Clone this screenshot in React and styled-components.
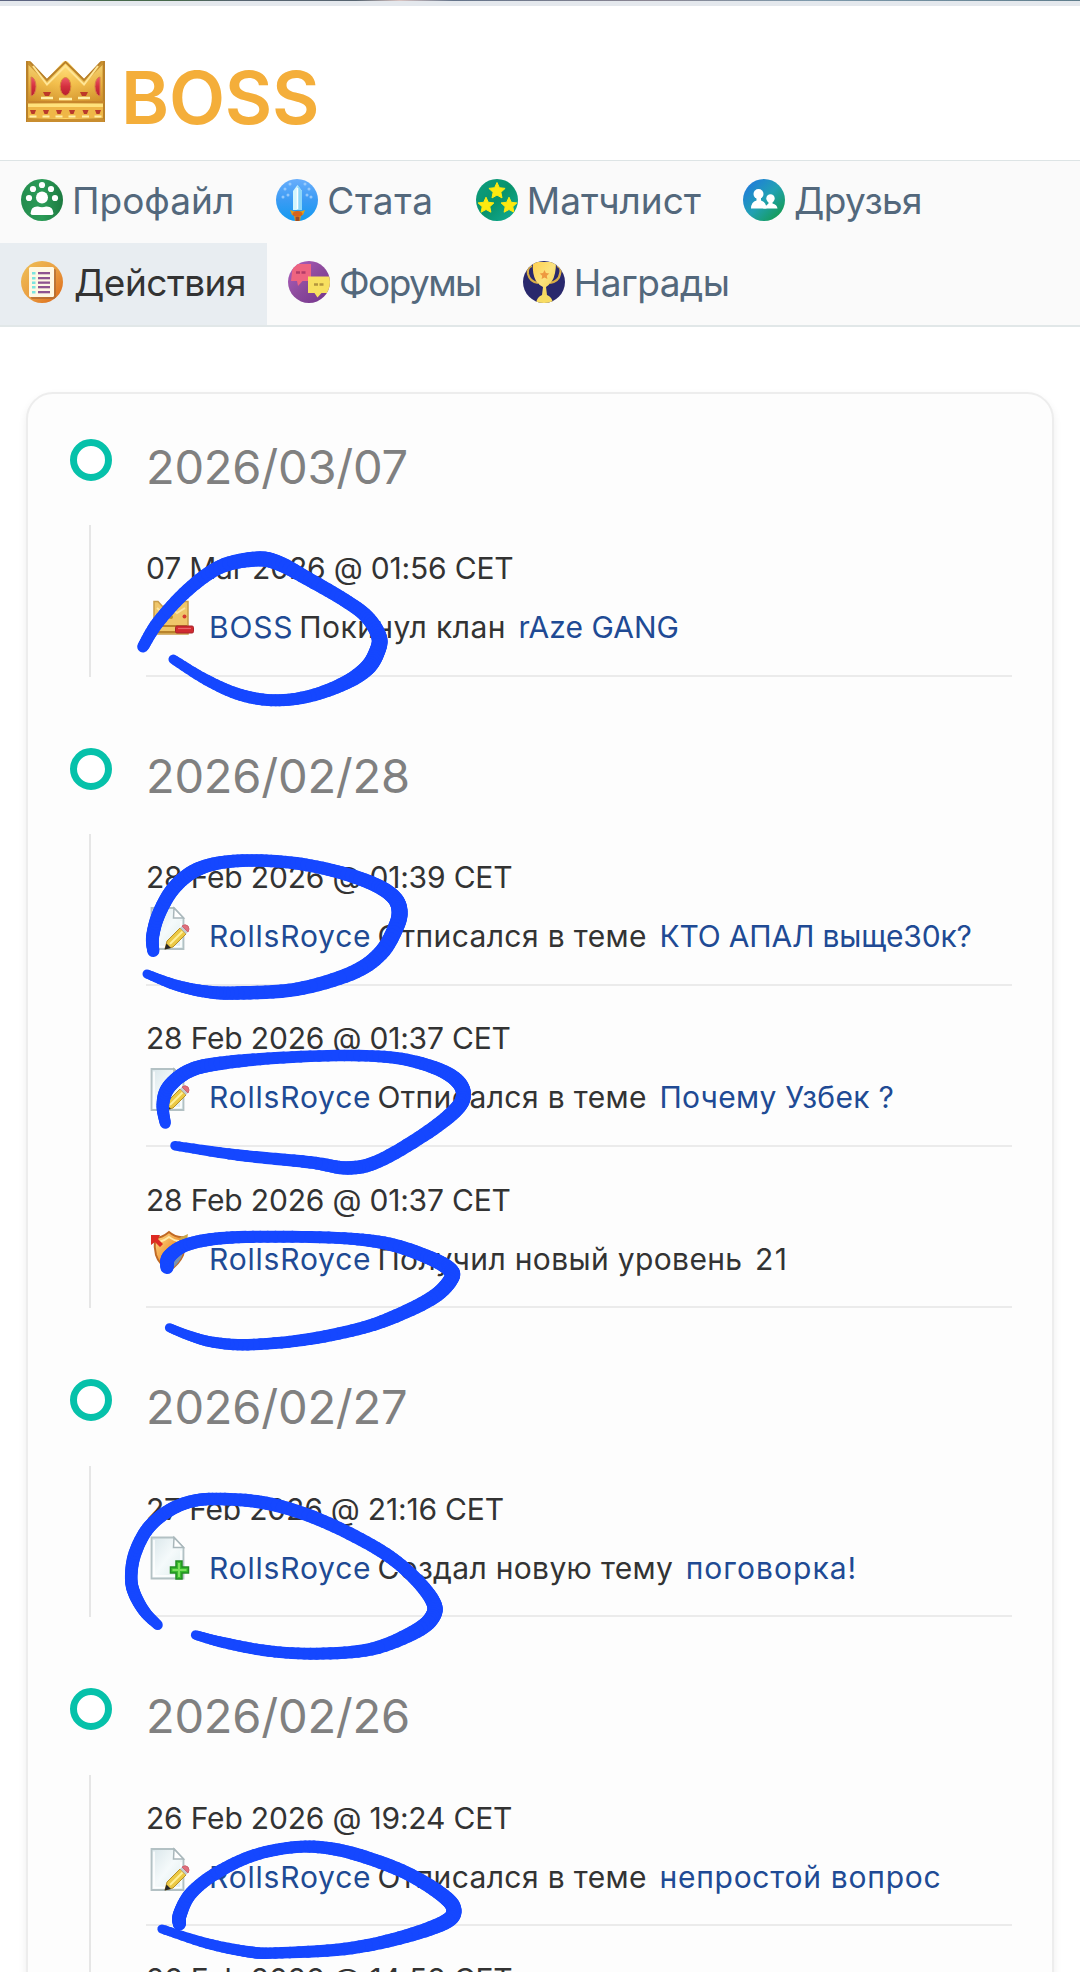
import React from "react";
import styled, { createGlobalStyle } from "styled-components";

const GlobalStyle = createGlobalStyle`
  * { box-sizing: border-box; }
  body { margin: 0; background: #fff; }
`;

const Page = styled.div`
  position: relative;
  width: 1080px;
  height: 1972px;
  overflow: hidden;
  background: #fff;
  color: #333;
  font-family: Inter, "Open Sans", sans-serif;
  font-size: 30px;
`;

const CoverEdge = styled.div`
  height: 6px;
  border-top: 1px solid #64798a;
  background: #e4e8ed;
  border-image: linear-gradient(90deg, #5c6480 0 5%, #46684a 9% 16%, #566470 22% 33%, #d9c4c2 37%, #64748a 42%, #8a8592 60%, #7e9aac 75%, #5f7d8c) 1;
  border-width: 1px 0 0;
`;

const Header = styled.header`
  display: flex;
  align-items: center;
  height: 154px;
  padding: 0 26px 0 26px;
`;

const HeaderCrown = styled.svg`
  width: 79px;
  height: 61px;
  margin-top: 17px;
`;

const Title = styled.h1`
  margin: 29px 0 0 16px;
  font-size: 73px;
  line-height: 88px;
  font-weight: 600;
  letter-spacing: -0.23px;
  color: #f4ae3a;
`;

const Nav = styled.nav`
  display: flex;
  flex-wrap: wrap;
  border-top: 1px solid #dde4e5;
  border-bottom: 2px solid #e1e7e8;
  background: #fafafa;
`;

const NavItem = styled.a`
  display: flex;
  align-items: center;
  gap: ${(p) => (p.$active ? 11 : 9)}px;
  height: 81.75px;
  padding: 0 21px 3px;
  font-size: 37px;
  letter-spacing: ${(p) => p.$track || 0}px;
  color: ${(p) => (p.$active ? "#333" : "#53687c")};
  background: ${(p) => (p.$active ? "#e8edf1" : "transparent")};
  svg { width: 42px; height: 42px; flex: none; }
`;

const NavBreak = styled.span`
  flex-basis: 100%;
  height: 0;
`;

const Card = styled.main`
  margin: 65px 26px 0;
  height: 1700px;
  padding: 45px 40px 0 42px;
  border: 2px solid #ededed;
  border-radius: 27px;
  background: #fdfdfd;
  box-shadow: 0 4px 9px rgba(0, 0, 0, 0.07);
`;

const Group = styled.section`
  margin-bottom: 71px;
`;

const GroupHead = styled.div`
  display: flex;
  align-items: flex-start;
  height: 86.5px;
`;

const Ring = styled.span`
  width: 42px;
  height: 42px;
  border: 7px solid #06c1aa;
  border-radius: 50%;
  background: #fff;
`;

const DateTitle = styled.h2`
  margin: 0 0 0 34px;
  font-size: 47px;
  line-height: 56px;
  font-weight: 400;
  letter-spacing: -0.22px;
  color: #808080;
`;

const GroupBody = styled.div`
  display: flex;
  flex-direction: column;
  gap: 9.8px;
  margin-left: 19px;
  padding-left: 55px;
  border-left: 2px solid #e6e6e6;
`;

const Entry = styled.article`
  padding: 14px 0 17.5px;
  border-bottom: 2px solid #ebebeb;
`;

const Meta = styled.div`
  height: 59px;
  line-height: 59px;
  letter-spacing: -0.19px;
  white-space: pre;
`;

const Line = styled.div`
  display: flex;
  height: 59px;
  line-height: 59px;
  white-space: pre;
`;

const LineIcon = styled.svg`
  flex: none;
  width: 63px;
  height: 59px;
  overflow: visible;
`;

const Name = styled.a`
  color: #204a94;
  letter-spacing: 0.8px;
  margin-right: 6px;
`;

const Action = styled.span`
  letter-spacing: ${(p) => p.$track}px;
  margin-right: 12.5px;
`;

const Target = styled.a`
  color: ${(p) => (p.$plain ? "#333" : "#204a94")};
  letter-spacing: ${(p) => p.$track}px;
`;

const InkLayer = styled.svg`
  position: absolute;
  inset: 0;
  width: 1080px;
  height: 1972px;
  pointer-events: none;
`;

function Defs() {
  const grads = [
    ["gold", 0, 1, "#ffe183", "#f3bd49", "#cf8c27"],
    ["goldside", 1, 0, "#c58c2b", "#ffd766", "#c58c2b"],
    ["gem", 0, 1, "#ee5a68", "#d4303e", "#b81f30"],
    ["leaf", 1, 0, "#248c4e", "#2c9c58", "#1c7a40"],
    ["sky", 0, 1, "#68aefc", "#3b9bf4", "#139af0"],
    ["teal", 1, 1, "#0e9d80", "#08936c", "#12ae98"],
    ["pals", 1, 1, "#1f72e4", "#21a1b4", "#119a38"],
    ["amber", 1, 1, "#efc158", "#eaa043", "#db6414"],
    ["violet", 1, 1, "#b060c0", "#8c4a9c", "#72348c"],
    ["paper", 1, 1, "#d9e6ea", "#f5fafb", "#dcebec"],
    ["shield", 1, 1, "#ffe28c", "#f09a3c", "#d87416"],
    ["cup", 1, 1, "#ffd050", "#fbe27e", "#f3cb40"],
  ];
  return (
    <svg width="0" height="0" style={{ position: "absolute" }}>
      <defs>
        {grads.map(([id, x, y, a, b, c]) => (
          <linearGradient key={id} id={id} x1="0" y1="0" x2={x} y2={y}>
            <stop offset="0" stopColor={a} />
            <stop offset="0.5" stopColor={b} />
            <stop offset="1" stopColor={c} />
          </linearGradient>
        ))}
        <clipPath id="disc"><circle cx="21" cy="21" r="21" /></clipPath>
      </defs>
    </svg>
  );
}

const Crown = () => (
  <HeaderCrown viewBox="0 0 79 61">
    <path d="M0 0H4L21 18L37 1Q39.500 -1 42 1L58 18L75 0H79V61H0Z" fill="url(#goldside)" />
    <path d="M2.500 4L21 23L39.500 4L58 23L76.500 4V41H2.500Z" fill="url(#gold)" opacity="0.75" />
    <path d="M1 0V60H78V0M4 1L21 19L39.500 1L58 19L75 1" fill="none" stroke="#b8802b" strokeWidth="1.800" />
    <path d="M7 5L21 23.500L39.500 5L58 23.500L72 5" fill="none" stroke="#ffe595" strokeWidth="2" />
    <path d="M5 16A5 9.500 0 0 1 5 35Z" fill="url(#gem)" stroke="#d87a4a" />
    <path d="M74 16A5 9.500 0 0 0 74 35Z" fill="url(#gem)" stroke="#d87a4a" />
    <ellipse cx="39.500" cy="25.500" rx="5.300" ry="9" fill="url(#gem)" stroke="#d8883a" />
    <path d="M17 31H25L23 35H19ZM54 31H62L60 35H56Z" fill="#bd3828" />
    <path d="M15 37H27M52 37H64M33 38H46" stroke="#fff0a8" strokeWidth="2.500" />
    <rect x="1" y="40" width="77" height="2.500" fill="#c8872d" />
    <rect x="2" y="42.500" width="75" height="3.500" fill="#ffe27c" />
    <rect x="2" y="46" width="75" height="11" fill="#efb747" />
    {[7, 20, 33, 46, 59.500, 72].map((x) => (
      <g key={x}>
        <path d={`M${x - 3} 49H${x + 3}L${x + 1.500} 53H${x - 1.500}Z`} fill="#b93a2c" />
        <path d={`M${x - 3.500} 55.500H${x + 3.500}`} stroke="#fff0a8" strokeWidth="2" />
      </g>
    ))}
    <rect x="1" y="58" width="77" height="3" fill="#c98d2f" />
  </HeaderCrown>
);

const Disc = ({ fill, children }) => (
  <svg viewBox="0 0 42 42">
    <g clipPath="url(#disc)">
      <rect width="42" height="42" fill={fill} />
      {children}
    </g>
  </svg>
);

const star = (cx, cy, r) =>
  Array.from({ length: 10 }, (_, i) => {
    const a = -Math.PI / 2 + (i * Math.PI) / 5;
    const q = i % 2 ? r * 0.48 : r;
    return `${(cx + q * Math.cos(a)).toFixed(1)},${(cy + q * Math.sin(a)).toFixed(1)}`;
  }).join(" ");

const ProfileIcon = () => (
  <Disc fill="url(#leaf)">
    <g fill="#fff">
      <circle cx="21" cy="18.500" r="6" />
      <path d="M9.500 34.500Q10 27 17 27.500Q21 29 25 27.500Q32 27 32.500 34.500Q32 36 30 36H12Q10 36 9.500 34.500Z" />
      {[[21, 6], [12, 10], [30, 10], [8, 19], [34, 19]].map(([x, y]) => (
        <circle key={x} cx={x} cy={y} r="3.100" />
      ))}
    </g>
  </Disc>
);

const StatsIcon = () => (
  <Disc fill="url(#sky)">
    {[[9, 10], [7, 18], [33, 10], [35, 18], [14, 5], [29, 5], [12, 16], [31, 16]].map(([x, y]) => (
      <circle key={`${x}-${y}`} cx={x} cy={y} r="1.500" fill="#a6d2fc" opacity="0.8" />
    ))}
    <path d="M17 12L21.500 6L26 12V31H17Z" fill="#d2f5fd" />
    <path d="M21.500 6L26 12V31H21.500Z" fill="#8ed7f8" />
    <path d="M21.500 9V30" stroke="#fff" strokeWidth="1.500" />
    <path d="M14 31Q21.500 34 29 31L27 36H25L24 42H19L18 36H16Z" fill="#e3a018" />
    <ellipse cx="21.500" cy="35" rx="5" ry="3" fill="#d5641c" />
    <rect x="19.500" y="38" width="4" height="5" fill="#9c4a28" />
  </Disc>
);

const MatchIcon = () => (
  <Disc fill="url(#teal)">
    {[[21, 12, 8.500], [10, 26.500, 8.300], [33, 26.500, 8.300]].map(([x, y, r]) => (
      <polygon key={x} points={star(x, y, r)} fill="#fde910" stroke="#fde910" strokeLinejoin="round" />
    ))}
  </Disc>
);

const FriendsIcon = () => (
  <Disc fill="url(#pals)">
    <g fill="#fff">
      <circle cx="15.500" cy="15" r="5" />
      <path d="M8 29.500Q8 23 13.500 21.500V18H18V21.500Q23 23 23.500 29.500Z" />
      <circle cx="27.500" cy="19.500" r="4.200" />
      <path d="M20 29.500L25.500 24.500V22H29.500V24.500Q34 25.500 34.500 29.500Z" />
    </g>
  </Disc>
);

const ActionsIcon = () => (
  <Disc fill="url(#amber)">
    <rect x="10" y="8" width="25" height="30" rx="1.500" fill="#ab6a35" opacity="0.7" />
    <rect x="8" y="6" width="25" height="30" rx="1.500" fill="#fff8e3" />
    {[11, 16, 20.500, 25, 30].map((y) => (
      <g key={y}>
        <rect x="11" y={y} width="3.500" height="2.500" fill="#7be5df" />
        <rect x="17" y={y} width="12" height="2.300" fill="#8e5490" />
      </g>
    ))}
  </Disc>
);

const ForumIcon = () => (
  <Disc fill="url(#violet)">
    <path d="M5 3H23V20H14.500L10 25L9 20H3Z" fill="#ee6480" />
    <path d="M8 11.500H18" stroke="#b33c68" strokeWidth="2.500" strokeDasharray="4 1.500" />
    <path d="M20 15.500H42V32H33.500L29.500 36.500L26.500 32H20Z" fill="#f7e060" />
    <path d="M26 23.500H36" stroke="#b4963e" strokeWidth="2.500" strokeDasharray="4 1.500" />
  </Disc>
);

const AwardIcon = () => (
  <Disc fill="#29286c">
    <path d="M9 5Q4 6 5 13Q7 21 15 22M34 5Q39 6 37 13Q36 20 27 22" stroke="#d8ad46" strokeWidth="2.200" fill="none" />
    <path d="M10 1H33Q33 14 29 20Q26 24 23 26L24 34H19L20 26Q16 24 13 20Q9 13 10 1Z" fill="url(#cup)" />
    <polygon points={star(21.500, 14, 5)} fill="#ee9940" />
    <path d="M13 42Q14 36 19 34H24Q29 36 30 42Z" fill="#f8dc64" />
  </Disc>
);

const Sheet = ({ y }) => (
  <g>
    <path d={`M5.500 ${y}H28L37.500 ${y + 10}V${y + 41}H5.500Z`} fill="url(#paper)" stroke="#b3c1c4" strokeWidth="1.800" />
    <path d={`M28 ${y}L27.500 ${y + 10}H37.500Z`} fill="#fff" stroke="#a9b7bb" strokeWidth="1.500" />
    <path d={`M8 ${y + 2.500}V${y + 38.500}H35V${y + 13}`} fill="none" stroke="#fff" strokeWidth="1.500" />
  </g>
);

const entryIcons = {
  left: (
    <g>
      <path d="M8 3.500H12L17 9L23.500 3.500L31 9L37 3.500H42V36H8Z" fill="#efc66a" stroke="#c99d4a" strokeWidth="1.500" />
      <path d="M11 10L17 15L24 9L31 15L39 10" stroke="#fbe5a0" strokeWidth="2" fill="none" />
      <circle cx="38.500" cy="18.500" r="2" fill="#d43a30" />
      <circle cx="25" cy="19" r="2" fill="#b88d2f" />
      <path d="M9 28H41M9 34H41" stroke="#b8832c" strokeWidth="1.800" />
      <rect x="29.500" y="28" width="18" height="7" rx="1.500" fill="#d12a30" stroke="#a9252c" />
      <path d="M32 30.500H45" stroke="#e9676b" strokeWidth="1.200" />
    </g>
  ),
  edit: (
    <g>
      <Sheet y={1} />
      <path d="M19 42L21 34L34 21L40 27L27 40Z" fill="#ecc944" stroke="#b78f26" strokeWidth="1" />
      <path d="M24 37L36.500 24.500" stroke="#fff09a" strokeWidth="2" />
      <path d="M34 21L36 19L42 25L40 27Z" fill="#c3ccd0" />
      <path d="M36 19Q39 16.500 42 19Q44 22 42 25Z" fill="#e0707c" stroke="#cf6270" />
      <path d="M18.500 42.500L20.500 36.500L25 41Z" fill="#282828" />
    </g>
  ),
  create: (
    <g>
      <Sheet y={-1.5} />
      <path d="M30 22H36V28H42.500V34H36V40H30V34H24.500V28H30Z" fill="#38bb2d" stroke="#228d23" strokeWidth="1.500" />
      <path d="M33 24V38M26.500 31H40.500" stroke="#7be05e" strokeWidth="2" />
    </g>
  ),
  level: (
    <g>
      <path d="M9 8Q16 8 23 2Q30 8 38 7Q39 18 37 25Q33 34 24 40Q13 35 10 25Q8 17 9 8Z" fill="url(#shield)" stroke="#c06924" strokeWidth="2" />
      <path d="M24 22L38 13Q39 30 24 40Z" fill="#7b91ad" />
      <path d="M13 12Q18 11 23 7Q29 11 33 11" stroke="#ffe9a5" strokeWidth="2" fill="none" />
      <path d="M5 5L14 5L12 9L17 14L14 17L9 12L5 15Z" fill="#dd2a22" />
      <path d="M33 8L42 4L41 10L36 13Z" fill="#c9a448" />
    </g>
  ),
};

const navItems = [
  { label: "Профайл", icon: ProfileIcon, track: 0 },
  { label: "Стата", icon: StatsIcon, track: 0.7 },
  { label: "Матчлист", icon: MatchIcon, track: 0 },
  { label: "Друзья", icon: FriendsIcon, track: -0.65 },
  null,
  { label: "Действия", icon: ActionsIcon, track: -0.5, active: true },
  { label: "Форумы", icon: ForumIcon, track: -1.6 },
  { label: "Награды", icon: AwardIcon, track: -0.5 },
];

const reply = { icon: "edit", name: "RollsRoyce", action: "Отписался в теме", at: 0.38 };

const groups = [
  {
    date: "2026/03/07",
    entries: [
      { time: "07 Mar 2026 @ 01:56 CET", icon: "left", name: "BOSS", action: "Покинул клан", at: 0.45, target: "rAze GANG", tt: 0.02 },
    ],
  },
  {
    date: "2026/02/28",
    entries: [
      { ...reply, time: "28 Feb 2026 @ 01:39 CET", target: "КТО АПАЛ выще30к?", tt: -0.16 },
      { ...reply, time: "28 Feb 2026 @ 01:37 CET", target: "Почему Узбек ?", tt: 0.3 },
      { time: "28 Feb 2026 @ 01:37 CET", icon: "level", name: "RollsRoyce", action: "Получил новый уровень", at: 0.35, target: "21", tt: 1.4, plain: true },
    ],
  },
  {
    date: "2026/02/27",
    entries: [
      { time: "27 Feb 2026 @ 21:16 CET", icon: "create", name: "RollsRoyce", action: "Создал новую тему", at: 0.32, target: "поговорка!", tt: 1.04 },
    ],
  },
  {
    date: "2026/02/26",
    entries: [
      { ...reply, time: "26 Feb 2026 @ 19:24 CET", target: "непростой вопрос", tt: 0.74 },
      { time: "26 Feb 2026 @ 14:58 CET" },
    ],
  },
];

// Freehand marker strokes: [x, y, pen width] samples.
const strokes = [
  [[143, 646.7, 11.5], [158.4, 621.7, 12.5], [187.7, 590, 13], [220.4, 566.7, 14], [256.6, 559, 15], [279, 563.3, 15], [310, 580, 14], [344.4, 600, 13.5], [366.8, 616.7, 14], [379, 636.7, 15.5], [377, 651.7, 16], [366.8, 668.3, 16], [344.4, 683.3, 14], [310, 696, 12.5], [275.5, 700.3, 12], [241, 695, 12], [206.6, 680, 11], [173.2, 659.3, 9.5]],
  [[153.3, 951, 12], [152.6, 936.7, 13], [158.4, 915, 13.5], [172.2, 890, 14], [192.9, 871.7, 14], [220.4, 862.7, 13], [256.6, 860.5, 12.5], [296.2, 863.3, 12.5], [337.5, 871.7, 13], [372, 883.3, 14], [392.6, 896, 15], [399.5, 910, 16], [396, 927, 16], [380.6, 953.3, 15.5], [351.3, 973.3, 14.5], [296.2, 989.3, 13.5], [237.6, 993, 13.5], [206.6, 991.7, 12.5], [175.6, 985, 11], [147, 974, 9]],
  [[165.3, 1123.3, 11], [162.8, 1105, 12.5], [168.7, 1087, 14], [189.4, 1070.7, 14], [220.4, 1063.3, 13.5], [275.5, 1058, 12], [344.4, 1055.5, 11.5], [396, 1058, 12], [434, 1067.5, 13], [456.3, 1080, 14.5], [463.5, 1095, 15], [454.6, 1111, 15], [423.6, 1135, 14], [378.8, 1161, 13.5], [347.8, 1168, 13.5], [310, 1162.3, 12.5], [237.6, 1155, 11.5], [175, 1145.7, 9.5]],
  [[167, 1267.5, 13], [169, 1256.7, 14], [186, 1245, 13], [220.4, 1238.3, 12.5], [275.5, 1236.7, 12], [344.4, 1238.3, 12], [389.2, 1244, 13], [427, 1256.7, 14], [448.5, 1268.3, 15], [451.5, 1278.3, 15], [434, 1296.7, 14.5], [396, 1316, 13.5], [358.2, 1329, 12.5], [303, 1340, 12], [248, 1344.7, 11.5], [213.5, 1342.3, 11], [189.4, 1335.7, 10], [169.4, 1327.7, 9]],
  [[157.7, 1625, 10], [144.6, 1611.7, 11.5], [134.3, 1593.3, 12.5], [131.2, 1576.7, 12.5], [135, 1553.3, 13], [148, 1528.3, 13], [168.7, 1510.7, 13], [192.9, 1501, 12.5], [220.4, 1499, 12.5], [261.7, 1502.3, 13], [303, 1513.3, 13], [344.4, 1531, 13], [385.7, 1554, 13], [413.3, 1576.7, 13.5], [432.2, 1600, 14.5], [433.5, 1615, 15.5], [416.7, 1630.7, 15], [372, 1649, 13], [316.8, 1653.7, 12], [268.6, 1651, 11.5], [223.9, 1642.7, 11], [195.6, 1635, 9.5]],
  [[179.4, 1924, 13], [180, 1914, 14], [191, 1893.3, 13], [217, 1872.7, 12.5], [254.8, 1855, 12], [296.2, 1847, 12], [330.6, 1848.5, 12.5], [365, 1857, 13], [406.4, 1873, 13.5], [441, 1894, 14.5], [453.9, 1909.3, 15], [444.3, 1922.5, 15], [399.5, 1938, 13.5], [344.4, 1949, 12.5], [275.5, 1953, 11.5], [248, 1951.7, 11.5], [206.6, 1943.3, 10.5], [161.9, 1929, 9]],
];

function smooth(pts) {
  const out = [];
  for (let i = 0; i < pts.length - 1; i++) {
    const [a, b, c, d] = [pts[Math.max(i - 1, 0)], pts[i], pts[i + 1], pts[Math.min(i + 2, pts.length - 1)]];
    for (let k = 0; k < 8; k++) {
      const t = k / 8;
      out.push(
        [0, 1, 2].map((n) =>
          0.5 * (2 * b[n] + (c[n] - a[n]) * t + (2 * a[n] - 5 * b[n] + 4 * c[n] - d[n]) * t * t + (3 * b[n] - a[n] - 3 * c[n] + d[n]) * t * t * t)
        )
      );
    }
  }
  out.push(pts[pts.length - 1]);
  return out;
}

function Ink() {
  return (
    <InkLayer viewBox="0 0 1080 1972" stroke="#1547ff" strokeLinecap="round">
      {strokes.map((s, i) => {
        const pts = smooth(s);
        return (
          <g key={i}>
            {pts.slice(1).map((p, j) => (
              <line key={j} x1={pts[j][0]} y1={pts[j][1]} x2={p[0]} y2={p[1]} strokeWidth={p[2]} />
            ))}
          </g>
        );
      })}
    </InkLayer>
  );
}

export default function App() {
  return (
    <Page>
      <GlobalStyle />
      <Defs />
      <CoverEdge />
      <Header>
        <Crown />
        <Title>BOSS</Title>
      </Header>
      <Nav>
        {navItems.map((item, i) =>
          item ? (
            <NavItem key={i} $active={item.active} $track={item.track}>
              <item.icon />
              {item.label}
            </NavItem>
          ) : (
            <NavBreak key={i} />
          )
        )}
      </Nav>
      <Card>
        {groups.map((g) => (
          <Group key={g.date}>
            <GroupHead>
              <Ring />
              <DateTitle>{g.date}</DateTitle>
            </GroupHead>
            <GroupBody>
              {g.entries.map((e, i) => (
                <Entry key={i}>
                  <Meta>{e.time}</Meta>
                  {e.name && (
                    <Line>
                      <LineIcon viewBox="0 0 63 59">{entryIcons[e.icon]}</LineIcon>
                      <Name>{e.name}</Name>
                      <Action $track={e.at}>{e.action}</Action>
                      <Target $track={e.tt} $plain={e.plain}>{e.target}</Target>
                    </Line>
                  )}
                </Entry>
              ))}
            </GroupBody>
          </Group>
        ))}
      </Card>
      <Ink />
    </Page>
  );
}
